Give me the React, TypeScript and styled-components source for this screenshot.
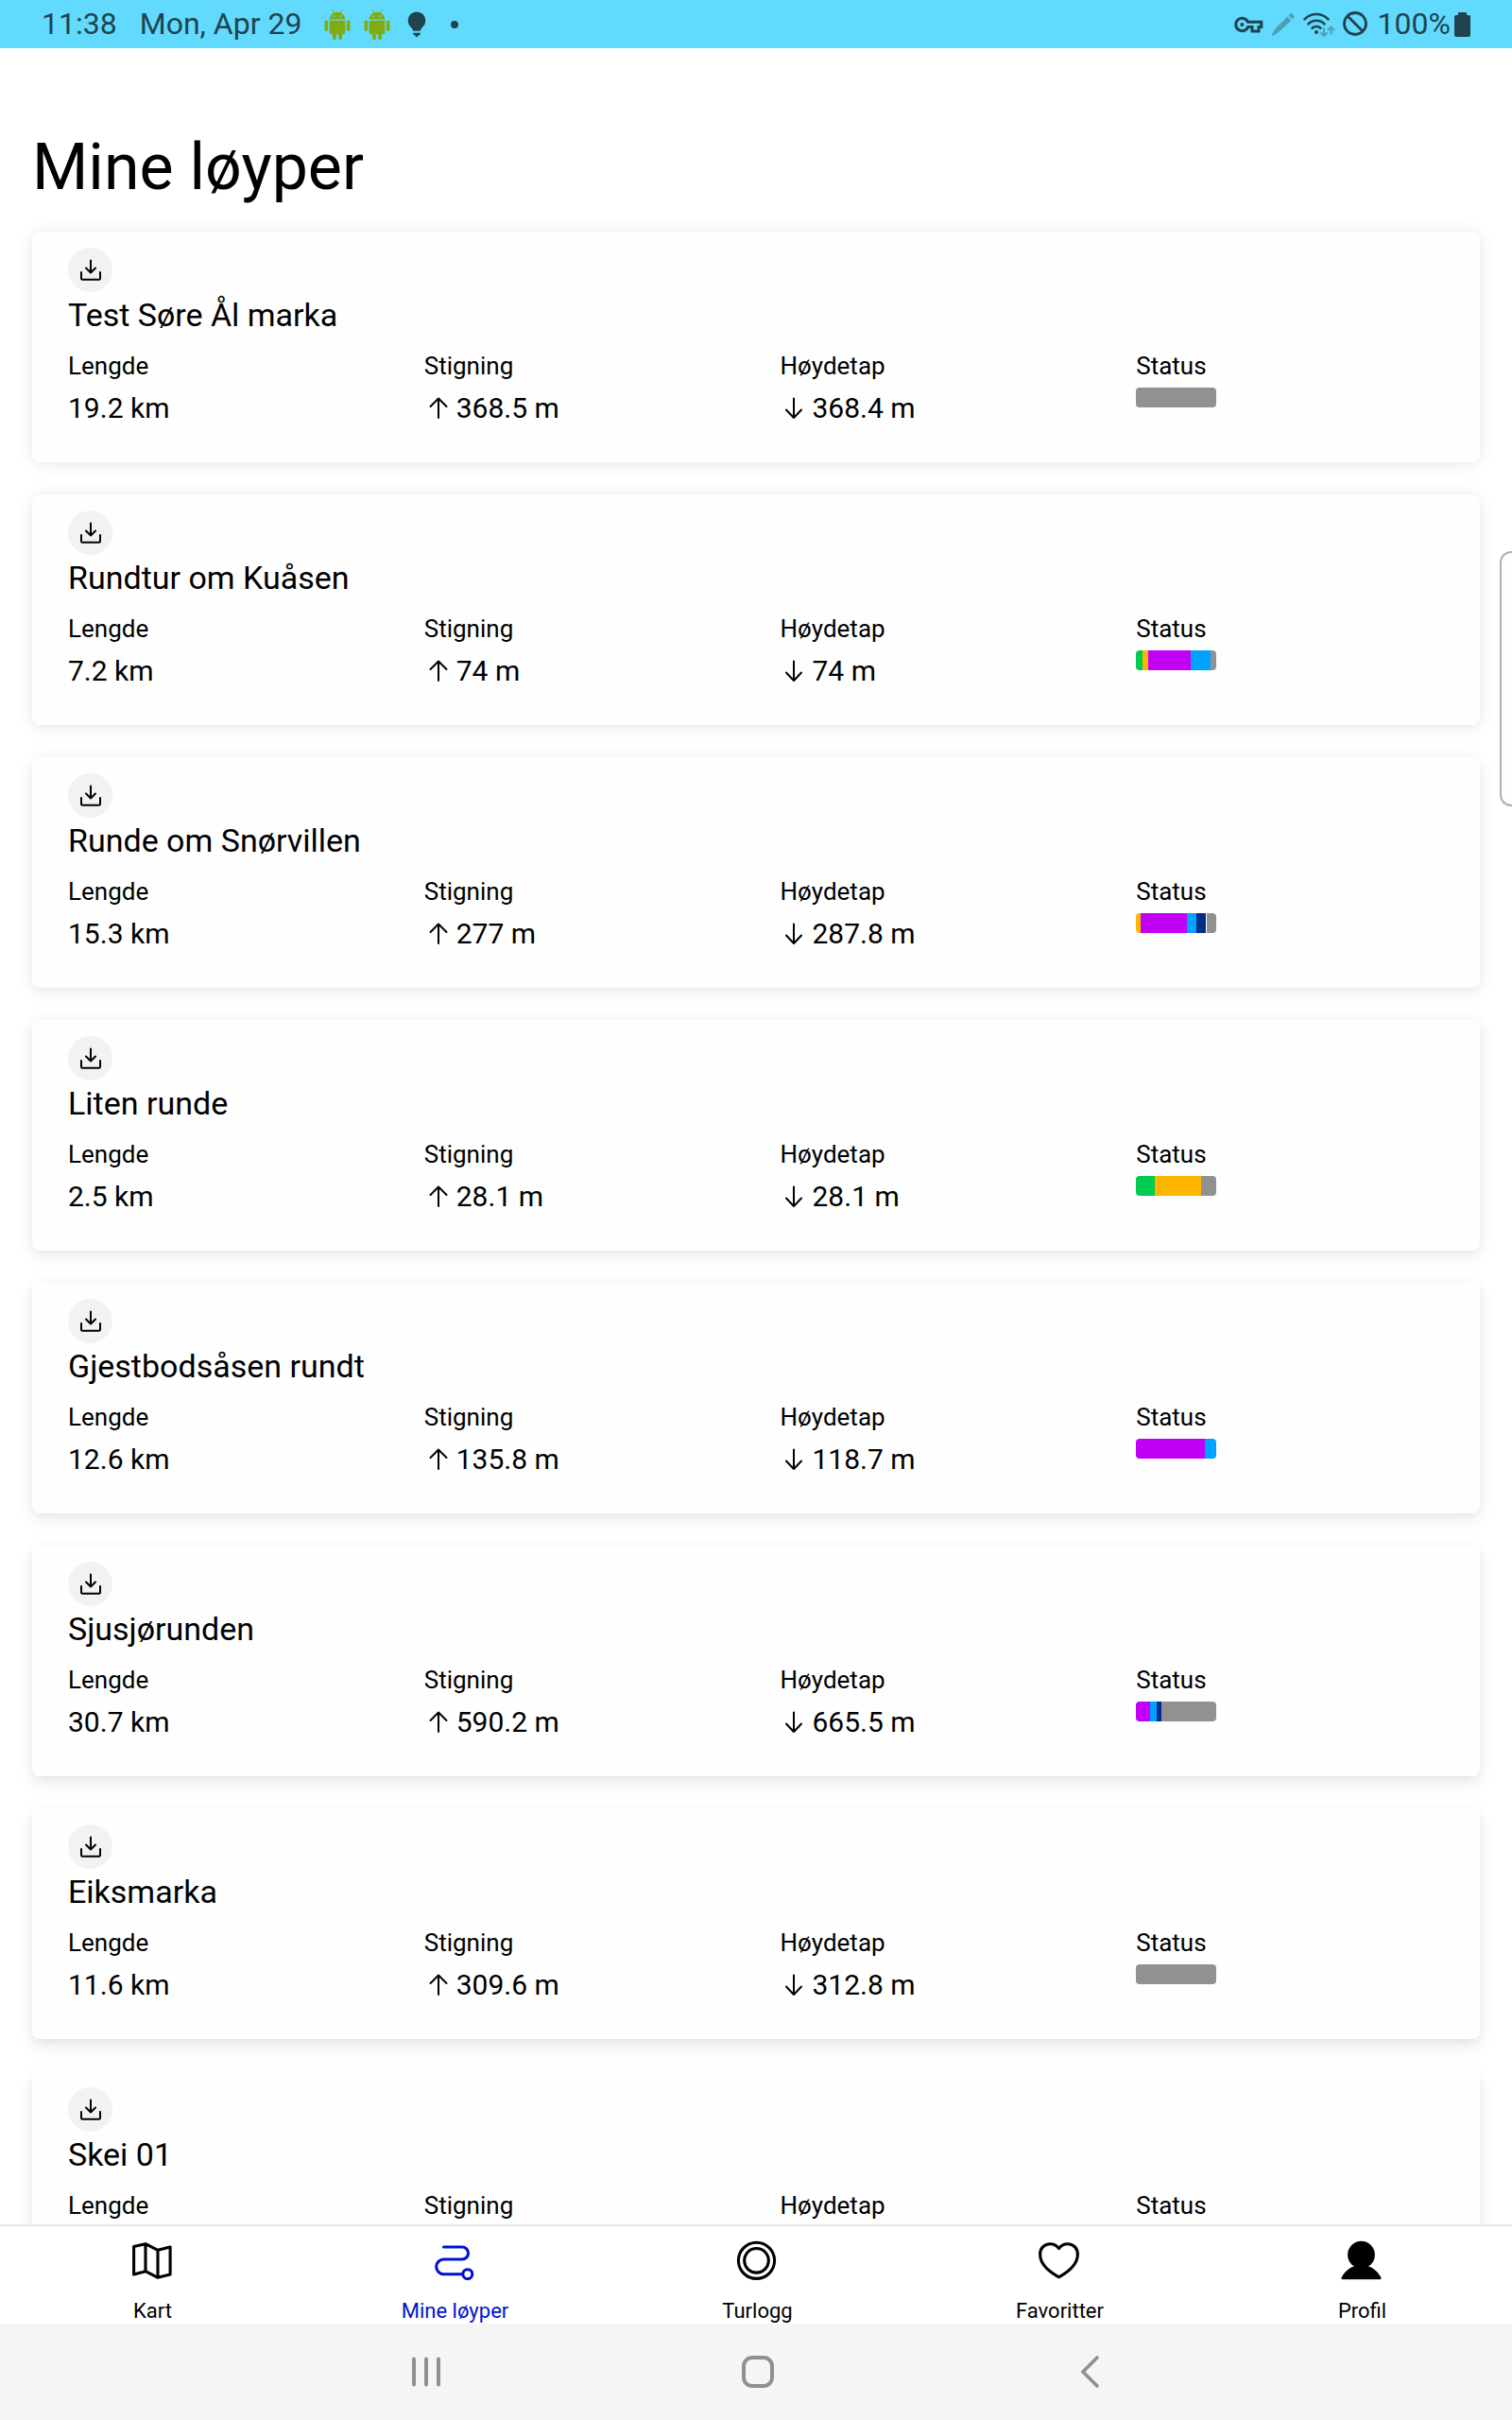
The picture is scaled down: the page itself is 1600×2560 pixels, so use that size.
import React from "react";
import styled, { createGlobalStyle } from "styled-components";

const INK = "#1f434f";
const ACCENT = "#0012cf";

const COLORS = {
  green: "#00cc52",
  orange: "#ffb600",
  purple: "#c200f5",
  blue: "#00a2ff",
  navy: "#002c8a",
  grey: "#919191",
  none: "#fefefe",
};

type Segment = [keyof typeof COLORS, number];

interface Trail {
  name: string;
  length?: string;
  climb?: string;
  descent?: string;
  status?: Segment[];
}

const trails: Trail[] = [
  { name: "Test Søre Ål marka", length: "19.2 km", climb: "368.5 m", descent: "368.4 m", status: [["grey", 85]] },
  {
    name: "Rundtur om Kuåsen",
    length: "7.2 km",
    climb: "74 m",
    descent: "74 m",
    status: [["green", 7], ["orange", 6], ["purple", 45], ["blue", 21], ["grey", 6]],
  },
  {
    name: "Runde om Snørvillen",
    length: "15.3 km",
    climb: "277 m",
    descent: "287.8 m",
    status: [["orange", 5], ["purple", 49], ["blue", 10], ["navy", 10], ["none", 1], ["grey", 10]],
  },
  {
    name: "Liten runde",
    length: "2.5 km",
    climb: "28.1 m",
    descent: "28.1 m",
    status: [["green", 20], ["orange", 49], ["grey", 16]],
  },
  {
    name: "Gjestbodsåsen rundt",
    length: "12.6 km",
    climb: "135.8 m",
    descent: "118.7 m",
    status: [["purple", 73], ["blue", 12]],
  },
  {
    name: "Sjusjørunden",
    length: "30.7 km",
    climb: "590.2 m",
    descent: "665.5 m",
    status: [["purple", 15], ["blue", 7], ["navy", 5], ["grey", 58]],
  },
  { name: "Eiksmarka", length: "11.6 km", climb: "309.6 m", descent: "312.8 m", status: [["grey", 85]] },
  { name: "Skei 01" },
];

const GlobalStyle = createGlobalStyle`
  *, *::before, *::after { box-sizing: border-box; }
  body { margin: 0; background: #fff; color: #000; font-family: Roboto, "Noto Sans", sans-serif; }
  h1, h2, dl, dt, dd, ul { margin: 0; padding: 0; font-weight: 400; }
  ul { list-style: none; }
  button { border: 0; padding: 0; font: inherit; cursor: pointer; }
  svg { display: block; flex: none; }
`;

const Screen = styled.div`
  position: relative;
  display: flex;
  flex-direction: column;
  height: 100vh;
  overflow: hidden;
`;

const StatusBar = styled.header`
  flex: none;
  display: flex;
  align-items: center;
  justify-content: space-between;
  height: 51px;
  padding: 0 44px;
  background: #62dafd;
  color: ${INK};
  font-size: 32px;
  line-height: 51px;
`;

const StatusGroup = styled.div<{ $gap: number }>`
  display: flex;
  align-items: center;
  gap: ${(p) => p.$gap}px;
`;

const DateText = styled.span`
  margin: 0 10px;
`;

const Percent = styled.span`
  margin: 0 -4px 0 2px;
`;

const Main = styled.main`
  flex: 1;
  min-height: 0;
  overflow: hidden;
  padding: 86px 34px 0;
`;

const Title = styled.h1`
  margin-bottom: 28px;
  font-size: 68px;
  line-height: 80px;
`;

const TrailList = styled.ul`
  display: flex;
  flex-direction: column;
  gap: 34px;
`;

const Card = styled.li<{ $depth: number }>`
  padding: 17px 38px 35px;
  border-radius: 8px;
  background: #fefefe;
  box-shadow:
    0 ${(p) => p.$depth}px 18px rgba(0, 0, 0, 0.09),
    0 ${(p) => Math.round(p.$depth / 2)}px 6px rgba(0, 0, 0, 0.03);
`;

const DownloadButton = styled.button`
  display: block;
  width: 47px;
  height: 47px;
  margin-bottom: 2px;
  border-radius: 50%;
  background: #f2f2f2;
  color: #000;
`;

const TrailName = styled.h2`
  margin-bottom: 15px;
  font-size: 34px;
  line-height: 44px;
`;

const Metrics = styled.dl`
  display: grid;
  grid-template-columns: repeat(4, 1fr);
  column-gap: 51px;
`;

const Metric = styled.div`
  display: flex;
  flex-direction: column;
  gap: 6px;
`;

const MetricLabel = styled.dt`
  font-size: 26px;
  line-height: 34px;
`;

const MetricValue = styled.dd`
  display: flex;
  align-items: center;
  font-size: 30px;
  line-height: 44px;
`;

const StatusValue = styled.dd`
  display: flex;
  width: 85px;
  height: 21px;
  border-radius: 4px;
  overflow: hidden;
`;

const StatusSegment = styled.span<{ $color: string; $share: number }>`
  flex: ${(p) => p.$share} 0 0;
  background: ${(p) => p.$color};
`;

const EdgeHandle = styled.div`
  position: absolute;
  top: 583px;
  right: 0;
  width: 13px;
  height: 270px;
  border: 2px solid #b0b0b0;
  border-right: 0;
  border-radius: 12px 0 0 12px;
  background: #fefefe;
`;

const TabBar = styled.nav`
  flex: none;
  display: grid;
  grid-template-columns: repeat(5, 1fr);
  border-top: 2px solid #e6e6e6;
  background: #fff;
`;

const Tab = styled.a<{ $active?: boolean }>`
  display: flex;
  flex-direction: column;
  align-items: center;
  gap: 17px;
  padding-top: 12px;
  color: ${(p) => (p.$active ? ACCENT : "#000")};
  font-size: 22px;
  line-height: 26px;
  text-decoration: none;
`;

const TabLabel = styled.span`
  padding-left: 3px;
`;

const SystemNav = styled.nav`
  flex: none;
  display: flex;
  justify-content: center;
  height: 102px;
  padding-left: 4px;
  background: #f5f5f5;
`;

const SystemButton = styled.button`
  display: flex;
  align-items: center;
  justify-content: center;
  width: 22%;
  background: transparent;
  color: #909090;
`;

const AndroidIcon = () => (
  <svg width="28" height="32" viewBox="0 0 28 32" fill="#80ac0e" aria-hidden="true">
    <path d="M9 .5l2 3.6M19 .5l-2 3.6" stroke="#80ac0e" strokeWidth="1" />
    <path
      fillRule="evenodd"
      d="M5.6 10.6C5.8 6 9.5 2.7 14 2.7s8.2 3.3 8.4 7.9zM10.2 6a1 1 0 1 0 0 2 1 1 0 0 0 0-2zm7.6 0a1 1 0 1 0 0 2 1 1 0 0 0 0-2z"
    />
    <path d="M5.6 11.8h16.8v12.4a2 2 0 0 1-2 2H19v4a1.900 1.900 0 0 1-3.800 0v-4h-2.400v4a1.900 1.900 0 0 1-3.800 0v-4H7.600a2 2 0 0 1-2-2z" />
    <rect x="0.5" y="11.5" width="3.6" height="11.5" rx="1.8" />
    <rect x="23.9" y="11.5" width="3.6" height="11.5" rx="1.8" />
  </svg>
);

const BulbIcon = () => (
  <svg width="28" height="28" viewBox="-4 0 28 28" fill={INK} aria-hidden="true">
    <path d="M10 .4a9.300 9.300 0 0 1 9.300 9.300c0 3.600-1.800 5.800-3.800 7.800-1 1-1.500 2-1.600 3.300H6.100C6 19.500 5.500 18.500 4.500 17.500 2.500 15.500.7 13.300.7 9.700A9.300 9.300 0 0 1 10 .4z" />
    <path d="M6.300 22.700h7.400v2.200H12.500L10 27.400 7.500 24.900H6.300z" />
  </svg>
);

const DotIcon = () => (
  <svg width="28" height="10" viewBox="0 0 28 10" fill={INK} aria-hidden="true">
    <circle cx="12" cy="5" r="4" />
  </svg>
);

const KeyIcon = () => (
  <svg width="31" height="20" viewBox="0 0 31 20" fill="none" stroke={INK} strokeWidth="3" aria-hidden="true">
    <path d="M14.6 7.300H28.800V12.600H26V17H19V12.600H14.600A6.700 6.700 0 1 1 14.600 7.300z" />
    <circle cx="8.3" cy="10" r="2" fill={INK} stroke="none" />
  </svg>
);

const PencilIcon = () => (
  <svg width="26" height="26" viewBox="0 0 26 26" fill="#4d9fb8" aria-hidden="true">
    <path d="M17.3 4.7l4 4L7 22l-5.200 2.800a.7.700 0 0 1-.9-.9L3.800 18z" />
    <path d="M18.6 3.4l1.800-1.800a1.500 1.500 0 0 1 2.100 0l1.900 1.900a1.500 1.500 0 0 1 0 2.100l-1.800 1.800z" />
  </svg>
);

const WifiIcon = () => (
  <svg width="34" height="28" viewBox="0 0 34 28" fill="none" strokeLinecap="round" aria-hidden="true">
    <g stroke={INK} strokeWidth="2.6">
      <path d="M1.5 8.300a17.500 17.500 0 0 1 25 0" />
      <path d="M5.5 13.300a12 12 0 0 1 17 0" />
      <path d="M9.6 17.800a6.300 6.300 0 0 1 8.800 0" />
    </g>
    <circle cx="14" cy="22" r="2" fill={INK} />
    <g stroke="#4d9fb8" strokeWidth="2" strokeLinejoin="round">
      <path d="M22 18v8M19 23l3 3 3-3" />
      <path d="M29.5 24v-7M26.5 19.500l3-3 3 3" />
    </g>
  </svg>
);

const BlockedIcon = () => (
  <svg width="27" height="28" viewBox="1 0 27 28" fill="none" stroke={INK} strokeWidth="2.8" aria-hidden="true">
    <circle cx="14" cy="13" r="11.500" />
    <path d="M6 5l16 16" />
  </svg>
);

const BatteryIcon = () => (
  <svg width="17" height="26" viewBox="0 0 17 26" fill={INK} aria-hidden="true">
    <path d="M5 0h7a1 1 0 0 1 1 1v2h2a2 2 0 0 1 2 2v19a2 2 0 0 1-2 2H2a2 2 0 0 1-2-2V5a2 2 0 0 1 2-2h2V1a1 1 0 0 1 1-1z" />
  </svg>
);

const DownloadIcon = () => (
  <svg
    width="47"
    height="47"
    viewBox="0 0 47 47"
    fill="none"
    stroke="currentColor"
    strokeWidth="2"
    strokeLinecap="round"
    strokeLinejoin="round"
    aria-hidden="true"
  >
    <path d="M24 13.500v13M19 21.500l5 5 5-5" />
    <path d="M14 26v6.500a1.300 1.300 0 0 0 1.300 1.300h17.400a1.300 1.300 0 0 0 1.300-1.300V26" />
  </svg>
);

const ArrowIcon = ({ down = false }: { down?: boolean }) => (
  <svg
    width="34"
    height="32"
    viewBox="0 0 34 32"
    fill="none"
    stroke="currentColor"
    strokeWidth="2"
    strokeLinecap="round"
    strokeLinejoin="round"
    aria-hidden="true"
  >
    {down ? <path d="M14 5.500V26M6 17.500L14 26l8-8.500" /> : <path d="M15 26V5.500M6.500 14L15 5.500l8.500 8.500" />}
  </svg>
);

const TabIcon = ({ children }: { children: React.ReactNode }) => (
  <svg
    width="48"
    height="48"
    viewBox="0 0 48 48"
    fill="none"
    stroke="currentColor"
    strokeWidth="3.1"
    strokeLinecap="round"
    strokeLinejoin="round"
    aria-hidden="true"
  >
    {children}
  </svg>
);

const tabs = [
  {
    label: "Kart",
    href: "#kart",
    icon: <path d="M5.6 9.600L18 6.700l13 6.600L44.100 10v29L31 42.300l-13-6.600L5.600 39zM18 6.700v29M31 13.300v29" />,
  },
  {
    label: "Mine løyper",
    href: "#loyper",
    active: true,
    icon: (
      <>
        <path d="M13.5 10H33a6.500 6.500 0 0 1 0 13H13.500a7.850 7.850 0 0 0 0 15.700H33.500" />
        <circle cx="38.8" cy="38.7" r="5" />
      </>
    ),
  },
  {
    label: "Turlogg",
    href: "#turlogg",
    icon: (
      <>
        <circle cx="24.5" cy="24.3" r="19.1" />
        <circle cx="24.5" cy="24.3" r="12.8" />
      </>
    ),
  },
  {
    label: "Favoritter",
    href: "#favoritter",
    icon: (
      <path d="M24.5 11.500C22 8.300 18.800 6.700 15.200 6.700 9 6.700 4.600 11.400 4.600 17.500c0 10.200 8.600 18.200 19.900 24.300 11.300-6.100 19.900-14.100 19.900-24.300 0-6.100-4.400-10.800-10.600-10.800-3.600 0-6.800 1.600-9.300 4.800z" />
    ),
  },
  {
    label: "Profil",
    href: "#profil",
    icon: (
      <g fill="currentColor" stroke="none">
        <ellipse cx="24.5" cy="18.2" rx="14.4" ry="14.5" />
        <path d="M17 30.500h15c5 1.200 10.500 6 13.400 11.800.5 1-.1 1.900-1.100 1.900H4.700c-1 0-1.600-.9-1.100-1.900C6.500 36.500 12 31.700 17 30.500z" />
      </g>
    ),
  },
];

const TrailCard = ({ trail, depth }: { trail: Trail; depth: number }) => (
  <Card $depth={depth}>
    <DownloadButton type="button" aria-label={`Last ned ${trail.name}`}>
      <DownloadIcon />
    </DownloadButton>
    <TrailName>{trail.name}</TrailName>
    <Metrics>
      <Metric>
        <MetricLabel>Lengde</MetricLabel>
        {trail.length && <MetricValue>{trail.length}</MetricValue>}
      </Metric>
      <Metric>
        <MetricLabel>Stigning</MetricLabel>
        {trail.climb && (
          <MetricValue>
            <ArrowIcon />
            {trail.climb}
          </MetricValue>
        )}
      </Metric>
      <Metric>
        <MetricLabel>Høydetap</MetricLabel>
        {trail.descent && (
          <MetricValue>
            <ArrowIcon down />
            {trail.descent}
          </MetricValue>
        )}
      </Metric>
      <Metric>
        <MetricLabel>Status</MetricLabel>
        {trail.status && (
          <StatusValue>
            {trail.status.map(([color, share]) => (
              <StatusSegment key={color} $color={COLORS[color]} $share={share} />
            ))}
          </StatusValue>
        )}
      </Metric>
    </Metrics>
  </Card>
);

export default function App() {
  return (
    <>
      <GlobalStyle />
      <Screen>
        <StatusBar>
          <StatusGroup $gap={14}>
            <span>11:38</span>
            <DateText>Mon, Apr 29</DateText>
            <AndroidIcon />
            <AndroidIcon />
            <BulbIcon />
            <DotIcon />
          </StatusGroup>
          <StatusGroup $gap={8}>
            <KeyIcon />
            <PencilIcon />
            <WifiIcon />
            <BlockedIcon />
            <Percent>100%</Percent>
            <BatteryIcon />
          </StatusGroup>
        </StatusBar>
        <Main>
          <Title>Mine løyper</Title>
          <TrailList>
            {trails.map((trail, i) => (
              <TrailCard key={trail.name} trail={trail} depth={i + 1} />
            ))}
          </TrailList>
        </Main>
        <TabBar aria-label="Hovedmeny">
          {tabs.map((tab) => (
            <Tab key={tab.label} href={tab.href} $active={tab.active} aria-current={tab.active ? "page" : undefined}>
              <TabIcon>{tab.icon}</TabIcon>
              <TabLabel>{tab.label}</TabLabel>
            </Tab>
          ))}
        </TabBar>
        <SystemNav aria-label="System">
          <SystemButton type="button" aria-label="Nylige apper">
            <svg width="36" height="36" viewBox="0 0 36 36" stroke="currentColor" strokeWidth="4" strokeLinecap="round">
              <path d="M5 4.500v27M18 4.500v27M31 4.500v27" />
            </svg>
          </SystemButton>
          <SystemButton type="button" aria-label="Hjem">
            <svg width="36" height="36" viewBox="0 0 36 36" fill="none" stroke="currentColor" strokeWidth="4">
              <rect x="3" y="3" width="30" height="30" rx="9" />
            </svg>
          </SystemButton>
          <SystemButton type="button" aria-label="Tilbake">
            <svg
              width="36"
              height="36"
              viewBox="0 0 36 36"
              fill="none"
              stroke="currentColor"
              strokeWidth="3.6"
              strokeLinecap="round"
            >
              <path d="M26 3L11 18l15 15" />
            </svg>
          </SystemButton>
        </SystemNav>
        <EdgeHandle />
      </Screen>
    </>
  );
}
